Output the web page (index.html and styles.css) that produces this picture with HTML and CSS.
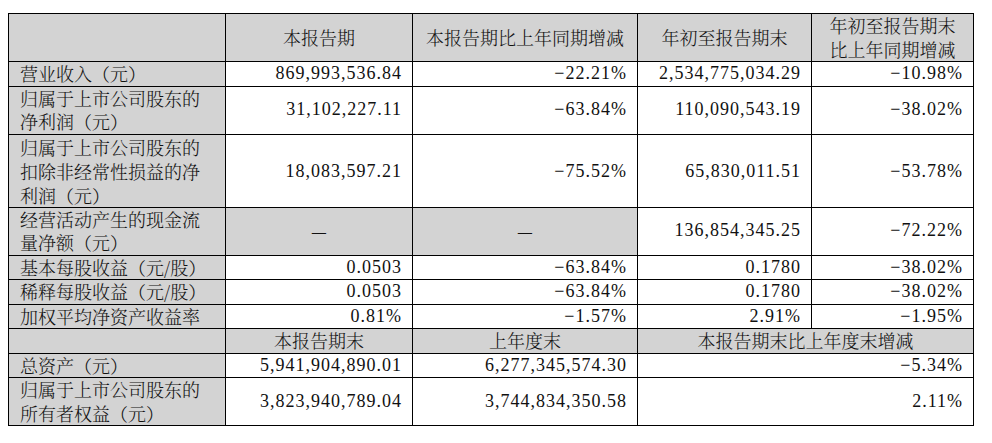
FILE: index.html
```html
<!DOCTYPE html>
<html lang="zh-CN">
<head>
<meta charset="utf-8">
<title>主要会计数据</title>
<link rel="stylesheet" href="styles.css">
</head>
<body>
<table class="fin">
  <colgroup>
    <col class="c1"><col class="c2"><col class="c3"><col class="c4"><col class="c5">
  </colgroup>
  <tr class="head">
    <td class="lab"></td>
    <td class="ctr">本报告期</td>
    <td class="ctr">本报告期比上年同期增减</td>
    <td class="ctr">年初至报告期末</td>
    <td class="ctr">年初至报告期末<br>比上年同期增减</td>
  </tr>
  <tr>
    <td class="lab">营业收入（元）</td>
    <td class="n">869,993,536.84</td>
    <td class="n">−22.21%</td>
    <td class="n">2,534,775,034.29</td>
    <td class="n">−10.98%</td>
  </tr>
  <tr>
    <td class="lab">归属于上市公司股东的<br>净利润（元）</td>
    <td class="n">31,102,227.11</td>
    <td class="n">−63.84%</td>
    <td class="n">110,090,543.19</td>
    <td class="n">−38.02%</td>
  </tr>
  <tr class="tall">
    <td class="lab">归属于上市公司股东的<br>扣除非经常性损益的净<br>利润（元）</td>
    <td class="n">18,083,597.21</td>
    <td class="n">−75.52%</td>
    <td class="n">65,830,011.51</td>
    <td class="n">−53.78%</td>
  </tr>
  <tr>
    <td class="lab">经营活动产生的现金流<br>量净额（元）</td>
    <td class="ctr gray">—</td>
    <td class="ctr gray">—</td>
    <td class="n">136,854,345.25</td>
    <td class="n">−72.22%</td>
  </tr>
  <tr>
    <td class="lab">基本每股收益（元/股）</td>
    <td class="n">0.0503</td>
    <td class="n">−63.84%</td>
    <td class="n">0.1780</td>
    <td class="n">−38.02%</td>
  </tr>
  <tr>
    <td class="lab">稀释每股收益（元/股）</td>
    <td class="n">0.0503</td>
    <td class="n">−63.84%</td>
    <td class="n">0.1780</td>
    <td class="n">−38.02%</td>
  </tr>
  <tr>
    <td class="lab">加权平均净资产收益率</td>
    <td class="n">0.81%</td>
    <td class="n">−1.57%</td>
    <td class="n">2.91%</td>
    <td class="n">−1.95%</td>
  </tr>
  <tr class="head">
    <td class="lab"></td>
    <td class="ctr">本报告期末</td>
    <td class="ctr">上年度末</td>
    <td class="ctr" colspan="2">本报告期末比上年度末增减</td>
  </tr>
  <tr>
    <td class="lab">总资产（元）</td>
    <td class="n">5,941,904,890.01</td>
    <td class="n">6,277,345,574.30</td>
    <td class="n" colspan="2">−5.34%</td>
  </tr>
  <tr>
    <td class="lab">归属于上市公司股东的<br>所有者权益（元）</td>
    <td class="n">3,823,940,789.04</td>
    <td class="n">3,744,834,350.58</td>
    <td class="n" colspan="2">2.11%</td>
  </tr>
</table>
</body>
</html>
```
FILE: styles.css
```css
html, body {
  background: #ffffff;
}
body {
  margin: 13px 8px 0 8px;
  font-family: "Noto Serif CJK SC", "Noto Sans CJK SC", serif;
  font-size: 18px;
  color: #111111;
}
.fin {
  border-collapse: collapse;
  table-layout: fixed;
  width: 965px;
}
.c1 { width: 217px; }
.c2 { width: 187px; }
.c3 { width: 225px; }
.c4 { width: 174px; }
.c5 { width: 162px; }
.fin td {
  border: 1px solid #000000;
  padding: 0;
  line-height: 23.5px;
  vertical-align: middle;
  white-space: nowrap;
  font-weight: 300;
}
.fin .tall td {
  line-height: 24px;
}
.fin .lab {
  background: #d3d3d3;
  padding-left: 11px;
  text-align: left;
}
.fin .head td {
  background: #d3d3d3;
}
.fin .ctr {
  text-align: center;
}
.fin .gray {
  background: #d3d3d3;
}
.fin .n {
  font-family: "Liberation Serif", "Times New Roman", serif;
  font-weight: 400;
  letter-spacing: 1px;
  text-align: right;
  padding-right: 10px;
}
```
